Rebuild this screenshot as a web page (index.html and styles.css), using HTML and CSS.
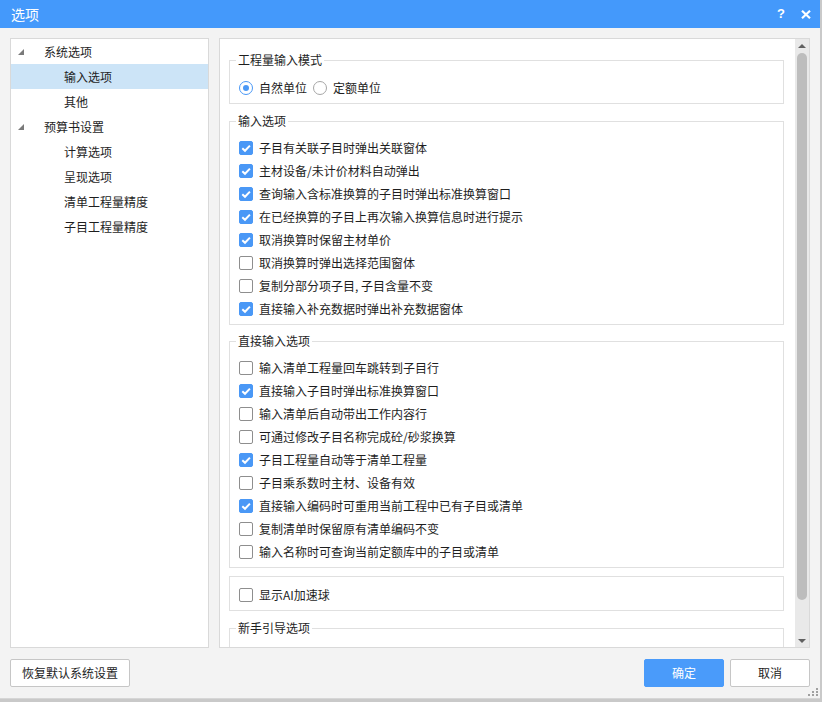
FILE: index.html
```html
<!DOCTYPE html>
<html lang="zh-CN">
<head>
<meta charset="utf-8">
<title>选项</title>
<link rel="stylesheet" href="styles.css">
</head>
<body>
<div class="dialog">
  <div class="titlebar">
    <span class="title">选项</span>
    <span class="tb-btns">
      <span class="help">?</span>
      <svg class="close" width="10" height="9" viewBox="0 0 10 9"><path d="M1 0.8 L9 8.2 M9 0.8 L1 8.2" stroke="#fff" stroke-width="2.2" fill="none"/></svg>
    </span>
  </div>

  <div class="main">
    <div class="tree">
      <div class="node lvl1"><svg class="tri" width="6" height="6" viewBox="0 0 6 6"><polygon points="6,0 6,6 0,6" fill="#7a7a7a"/></svg><span class="lbl">系统选项</span></div>
      <div class="node lvl2 sel">输入选项</div>
      <div class="node lvl2">其他</div>
      <div class="node lvl1"><svg class="tri" width="6" height="6" viewBox="0 0 6 6"><polygon points="6,0 6,6 0,6" fill="#7a7a7a"/></svg><span class="lbl">预算书设置</span></div>
      <div class="node lvl2">计算选项</div>
      <div class="node lvl2">呈现选项</div>
      <div class="node lvl2">清单工程量精度</div>
      <div class="node lvl2">子目工程量精度</div>
    </div>

    <div class="panel">
      <div class="scroll">
        <fieldset class="grp grp-first">
          <legend>工程量输入模式</legend>
          <div class="row">
            <span class="radio on"></span><span>自然单位</span>
            <span class="radio"></span><span>定额单位</span>
          </div>
        </fieldset>

        <fieldset class="grp">
          <legend>输入选项</legend>
          <div class="row"><span class="cb on"><svg width="14" height="14" viewBox="0 0 14 14"><path d="M3.3 7.2 L6 9.8 L10.9 4.6" stroke="#fff" stroke-width="2" fill="none"/></svg></span><span>子目有关联子目时弹出关联窗体</span></div>
          <div class="row"><span class="cb on"><svg width="14" height="14" viewBox="0 0 14 14"><path d="M3.3 7.2 L6 9.8 L10.9 4.6" stroke="#fff" stroke-width="2" fill="none"/></svg></span><span>主材设备/未计价材料自动弹出</span></div>
          <div class="row"><span class="cb on"><svg width="14" height="14" viewBox="0 0 14 14"><path d="M3.3 7.2 L6 9.8 L10.9 4.6" stroke="#fff" stroke-width="2" fill="none"/></svg></span><span>查询输入含标准换算的子目时弹出标准换算窗口</span></div>
          <div class="row"><span class="cb on"><svg width="14" height="14" viewBox="0 0 14 14"><path d="M3.3 7.2 L6 9.8 L10.9 4.6" stroke="#fff" stroke-width="2" fill="none"/></svg></span><span>在已经换算的子目上再次输入换算信息时进行提示</span></div>
          <div class="row"><span class="cb on"><svg width="14" height="14" viewBox="0 0 14 14"><path d="M3.3 7.2 L6 9.8 L10.9 4.6" stroke="#fff" stroke-width="2" fill="none"/></svg></span><span>取消换算时保留主材单价</span></div>
          <div class="row"><span class="cb"></span><span>取消换算时弹出选择范围窗体</span></div>
          <div class="row"><span class="cb"></span><span>复制分部分项子目, 子目含量不变</span></div>
          <div class="row"><span class="cb on"><svg width="14" height="14" viewBox="0 0 14 14"><path d="M3.3 7.2 L6 9.8 L10.9 4.6" stroke="#fff" stroke-width="2" fill="none"/></svg></span><span>直接输入补充数据时弹出补充数据窗体</span></div>
        </fieldset>

        <fieldset class="grp grp-tight">
          <legend>直接输入选项</legend>
          <div class="row"><span class="cb"></span><span>输入清单工程量回车跳转到子目行</span></div>
          <div class="row"><span class="cb on"><svg width="14" height="14" viewBox="0 0 14 14"><path d="M3.3 7.2 L6 9.8 L10.9 4.6" stroke="#fff" stroke-width="2" fill="none"/></svg></span><span>直接输入子目时弹出标准换算窗口</span></div>
          <div class="row"><span class="cb"></span><span>输入清单后自动带出工作内容行</span></div>
          <div class="row"><span class="cb"></span><span>可通过修改子目名称完成砼/砂浆换算</span></div>
          <div class="row"><span class="cb on"><svg width="14" height="14" viewBox="0 0 14 14"><path d="M3.3 7.2 L6 9.8 L10.9 4.6" stroke="#fff" stroke-width="2" fill="none"/></svg></span><span>子目工程量自动等于清单工程量</span></div>
          <div class="row"><span class="cb"></span><span>子目乘系数时主材、设备有效</span></div>
          <div class="row"><span class="cb on"><svg width="14" height="14" viewBox="0 0 14 14"><path d="M3.3 7.2 L6 9.8 L10.9 4.6" stroke="#fff" stroke-width="2" fill="none"/></svg></span><span>直接输入编码时可重用当前工程中已有子目或清单</span></div>
          <div class="row"><span class="cb"></span><span>复制清单时保留原有清单编码不变</span></div>
          <div class="row"><span class="cb"></span><span>输入名称时可查询当前定额库中的子目或清单</span></div>
        </fieldset>

        <div class="box">
          <div class="row"><span class="cb"></span><span>显示AI加速球</span></div>
        </div>

        <fieldset class="grp">
          <legend>新手引导选项</legend>
          <div class="row"></div>
        </fieldset>
      </div>
      <div class="sbar">
        <div class="sb-btn"><span class="arr-up"></span></div>
        <div class="thumb"></div>
        <div class="sb-fill"></div>
        <div class="sb-btn"><span class="arr-down"></span></div>
      </div>
    </div>
  </div>

  <div class="footer">
    <button class="btn">恢复默认系统设置</button>
    <div class="right-btns">
      <button class="btn btn-primary">确定</button>
      <button class="btn">取消</button>
    </div>
  </div>

  <svg class="grip" width="10" height="8" viewBox="0 0 10 8">
    <rect x="8" y="0" width="2" height="2" fill="#a0a0a0"/>
    <rect x="4" y="3" width="2" height="2" fill="#a0a0a0"/>
    <rect x="8" y="3" width="2" height="2" fill="#a0a0a0"/>
    <rect x="0" y="6" width="2" height="2" fill="#a0a0a0"/>
    <rect x="4" y="6" width="2" height="2" fill="#a0a0a0"/>
    <rect x="8" y="6" width="2" height="2" fill="#a0a0a0"/>
  </svg>
</div>
</body>
</html>
```

FILE: styles.css
```css
* { box-sizing: border-box; }

html, body {
  margin: 0;
  padding: 0;
  background: #c9c9c9;
  font-family: "Noto Sans CJK SC", "Noto Sans", sans-serif;
  font-size: 12px;
  color: #1e1e1e;
}

.dialog {
  position: relative;
  width: 820px;
  height: 699px;
  background: #f3f3f3;
  border-bottom: 1px solid #d6d6d6;
  display: flex;
  flex-direction: column;
  overflow: hidden;
}

.titlebar {
  height: 28px;
  flex: 0 0 28px;
  background: #4499fb;
  color: #fff;
  display: flex;
  align-items: center;
  justify-content: space-between;
  padding: 0 9px 0 11px;
}

.title {
  font-size: 14px;
  line-height: 28px;
}

.tb-btns {
  display: flex;
  align-items: center;
  gap: 16px;
}

.help {
  font-family: "Liberation Sans", sans-serif;
  font-weight: bold;
  font-size: 13px;
  line-height: 28px;
}

.close { display: block; }

.main {
  display: flex;
  gap: 10px;
  padding: 10px 10px 0 10px;
  height: 620px;
  flex: 0 0 620px;
}

.tree {
  width: 199px;
  height: 610px;
  background: #fff;
  border: 1px solid #d9d9d9;
}

.node {
  height: 25px;
  line-height: 25px;
  display: flex;
  align-items: center;
  white-space: nowrap;
}

.node.lvl1 { padding-left: 7px; }
.node.lvl1 .lbl { margin-left: 20px; }
.node.lvl2 { padding-left: 53px; }
.node.sel { background: #cce4f7; }

.tri { display: block; }

.panel {
  width: 591px;
  height: 610px;
  background: #fff;
  border: 1px solid #d9d9d9;
  display: flex;
  overflow: hidden;
}

.scroll {
  width: 575px;
  flex: 0 0 575px;
  padding: 13px 11px 0 9px;
  overflow: hidden;
}

.grp {
  margin: 9px 0 0 0;
  border: 1px solid #e0e0e0;
  padding: 7px 9px 4px 9px;
  min-width: 0;
}

.grp-first { margin-top: 0; padding-top: 8px; }
.grp-tight { margin-top: 8px; }

.grp legend {
  margin-left: -3px;
  padding: 0 2px;
  line-height: 16px;
  height: 16px;
}

.box {
  margin-top: 8px;
  border: 1px solid #e0e0e0;
  padding: 6px 9px 4px 9px;
}

.row {
  height: 23px;
  display: flex;
  align-items: center;
  gap: 6px;
  white-space: nowrap;
  line-height: 16px;
}

.cb {
  width: 14px;
  height: 14px;
  flex: 0 0 14px;
  border: 1px solid #8e8e8e;
  border-radius: 2px;
  background: #fff;
  position: relative;
}

.cb.on {
  background: #4a98f6;
  border-color: #4a98f6;
}

.cb svg {
  position: absolute;
  left: -1px;
  top: -1px;
}

.radio {
  width: 14px;
  height: 14px;
  flex: 0 0 14px;
  border: 1px solid #a6a6a6;
  border-radius: 50%;
  background: #fff;
  position: relative;
}

.radio.on { border-color: #4a98f6; }

.radio.on::after {
  content: "";
  position: absolute;
  left: 3px;
  top: 3px;
  width: 6px;
  height: 6px;
  border-radius: 50%;
  background: #4a98f6;
}

.sbar {
  width: 14px;
  flex: 0 0 14px;
  background: #e9e9e9;
  display: flex;
  flex-direction: column;
  align-items: center;
}

.sb-btn {
  height: 13px;
  flex: 0 0 13px;
  width: 14px;
  display: flex;
  align-items: center;
  justify-content: center;
}

.arr-up {
  width: 0;
  height: 0;
  border-left: 4px solid transparent;
  border-right: 4px solid transparent;
  border-bottom: 4px solid #606060;
}

.arr-down {
  width: 0;
  height: 0;
  border-left: 4px solid transparent;
  border-right: 4px solid transparent;
  border-top: 4px solid #606060;
}

.thumb {
  width: 10px;
  height: 547px;
  flex: 0 0 547px;
  margin-top: 1px;
  background: #bdbdbd;
  border-radius: 5px;
}

.sb-fill { flex: 1; }

.footer {
  display: flex;
  justify-content: space-between;
  padding: 11px 10px 0 10px;
}

.right-btns {
  display: flex;
  gap: 6px;
}

.btn {
  height: 28px;
  min-width: 80px;
  padding: 0 11px;
  background: #fff;
  border: 1px solid #c6c6c6;
  border-radius: 2px;
  font-family: "Noto Sans CJK SC", "Noto Sans", sans-serif;
  font-size: 12px;
  color: #1e1e1e;
  line-height: 26px;
}

.btn-primary {
  background: #4a9bfa;
  border-color: #4a9bfa;
  color: #fff;
}

.grip {
  position: absolute;
  right: 2px;
  bottom: 2px;
}
```
